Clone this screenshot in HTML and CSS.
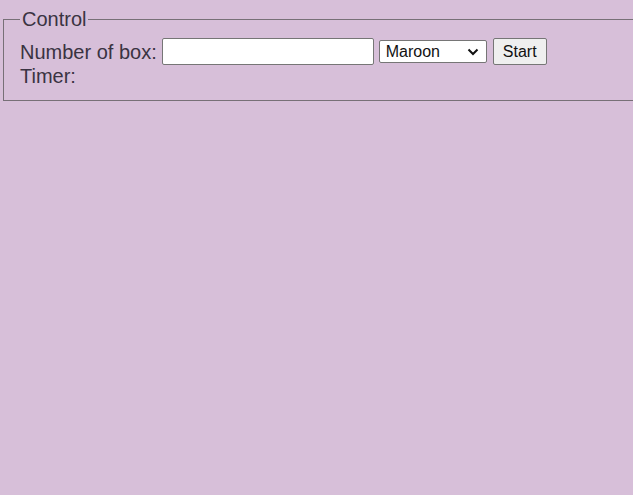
FILE: index.html
```html
<!DOCTYPE html>
<html>
<head>
<meta charset="utf-8">
<link rel="stylesheet" href="styles.css">
</head>
<body>
<fieldset class="control">
  <legend class="legend">Control</legend>
  <div class="row">
    <span class="label">Number of box:</span>
    <input class="num" type="text">
    <span class="select-wrap">
      <select class="color">
        <option>Maroon</option>
      </select>
      <svg class="chev" width="12" height="8" viewBox="0 0 12 8"><path d="M1.5 1.5 L6 6 L10.5 1.5" fill="none" stroke="#111" stroke-width="2"/></svg>
    </span>
    <button class="start">Start</button>
  </div>
  <div class="row timer">
    <span class="label">Timer:</span>
  </div>
</fieldset>
</body>
</html>
```

FILE: styles.css
```css
html, body {
  margin: 0;
  background: #d7bfd9;
  font-family: "Liberation Sans", Arial, sans-serif;
  color: #3a3342;
  overflow: hidden;
}
.control {
  margin: 8px 0 0 3px;
  padding: 8px 16px 13px 16px;
  border: 1px solid #777077;
  width: calc(100% + 2px);
  box-sizing: border-box;
}
.legend {
  font-size: 20px;
  padding: 0 2px;
  line-height: 22px;
}
.row {
  display: flex;
  align-items: center;
}
.label {
  font-size: 20px;
  line-height: 22px;
}
.num {
  margin: 0 0 0 5px;
  width: 212px;
  height: 27px;
  box-sizing: border-box;
  border: 1px solid #767676;
  border-radius: 2px;
  background: #fff;
  padding: 0 4px;
  font-size: 16px;
  font-family: "Liberation Sans", Arial, sans-serif;
}
.select-wrap {
  position: relative;
  display: inline-flex;
  margin: 0 0 0 5px;
}
.color {
  -webkit-appearance: none;
  appearance: none;
  width: 108px;
  height: 23px;
  box-sizing: border-box;
  border: 1px solid #767676;
  border-radius: 2px;
  background: #fff;
  font-size: 16px;
  color: #111;
  font-family: "Liberation Sans", Arial, sans-serif;
  padding: 0 0 0 6px;
  margin: 0;
}
.chev {
  position: absolute;
  right: 8px;
  top: 8px;
  pointer-events: none;
}
.start {
  margin: 0 0 0 6px;
  width: 54px;
  height: 27px;
  box-sizing: border-box;
  border: 1px solid #767676;
  border-radius: 2px;
  background: #efefef;
  font-size: 16px;
  color: #111;
  font-family: "Liberation Sans", Arial, sans-serif;
  padding: 0;
}
```
